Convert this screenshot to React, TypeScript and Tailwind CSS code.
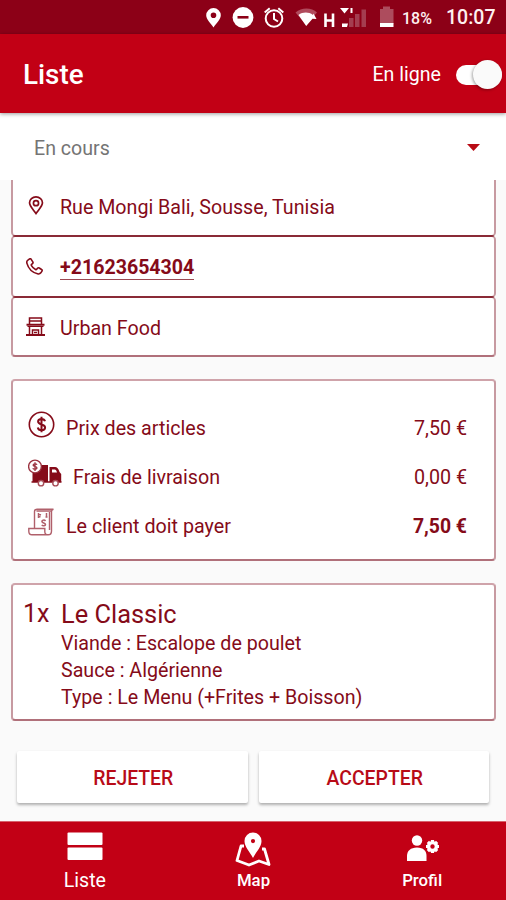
import React from "react";

const LocationIcon = () => (
  <svg className="mt-[-5px] h-[19px] w-[16px]" viewBox="0 0 16 20" fill="none" stroke="#850b19" strokeWidth="1.800">
    <path d="M8 18.400C5.400 14.600 1.200 10.800 1.200 7.200a6.800 6.200 0 0 1 13.600 0C14.800 10.800 10.600 14.600 8 18.400Z" />
    <circle cx="8" cy="7.500" r="2.700" />
  </svg>
);

const PhoneIcon = () => (
  <svg className="mt-[-2px] mr-[2px] h-[17px] w-[17px]" viewBox="0 0 18 18" fill="none" stroke="#850b19" strokeWidth="1.700" strokeLinejoin="round">
    <path d="M2 2.300 3.800 1C4.500.6 5.100.8 5.500 1.400l1.700 2.700c.4.700.3 1.300-.3 1.800l-1 .8c-.4.400-.4.800-.1 1.300 1.100 1.900 2.500 3.200 4.300 4.200.5.300.9.200 1.200-.2l.9-1.100c.5-.6 1.100-.7 1.800-.3l2.500 1.600c.7.400.8 1.100.4 1.700l-1.200 1.800c-.8 1.100-2 1.400-3.500 1C6.700 15.300 2.500 11 1 5.700.6 4.200.9 3 2 2.300Z" />
  </svg>
);

const ShopIcon = () => (
  <svg className="mt-[-5px] h-[19px] w-[19px] shrink-0" viewBox="0 0 19 19" fill="none" stroke="#850b19">
    <path strokeWidth="1.500" d="M3.500 7V1h12v6M3.500 4h12M3.500 9.500V18M15.500 9.500V18M6.500 18v-5h6v5M8 15.500h3" />
    <path strokeWidth="2" d="M.5 7.800h18M0 17.900h19" />
    <path d="M1.500 9.500h16" strokeWidth="1" />
  </svg>
);

const CoinIcon = () => (
  <svg className="mt-[-9px] h-[27px] w-[27px] shrink-0" viewBox="0 0 27 27" fill="none" stroke="#850b19">
    <circle cx="13.500" cy="13.500" r="12.200" strokeWidth="1.600" />
    <path d="M17 10.200c-.4-1.600-1.700-2.300-3.500-2.300-2 0-3.400 1-3.400 2.600 0 3.900 7 2 7 6 0 1.700-1.500 2.700-3.500 2.700s-3.500-1-3.800-2.700M13.500 5.700v15.600" strokeWidth="2" />
  </svg>
);

const TruckIcon = () => (
  <svg className="mt-[-9px] h-[28px] w-[34px] shrink-0" viewBox="0 0 34 28">
    <path fill="#850b19" d="M4.500 6H20v17H4.500zM21.500 8H27c2 0 3.500 1.700 4.500 5l1.700 2v8H21.500z" />
    <path fill="#fff" d="M24 10.500h2.700c1 0 1.800 1 2.300 3h-5z" />
    <path stroke="#850b19" strokeWidth="1.500" d="M3.500 23h30" />
    <g fill="#fff" stroke="#a84d58" strokeWidth="1.400">
      <circle cx="13" cy="24.200" r="2.700" />
      <circle cx="27.500" cy="24.200" r="2.700" />
      <circle cx="7" cy="7.500" r="6.400" stroke="#9b3340" />
    </g>
    <path fill="none" stroke="#9b3340" strokeWidth="1.300" d="M9 5.700c-.5-1-3.700-1.200-3.900.3-.2 1.700 3.900 1.200 3.900 3.100 0 1.500-3.600 1.500-4.200.1M7 3.300v8.600" />
  </svg>
);

const ReceiptIcon = () => (
  <svg className="mt-[-9px] h-[28px] w-[27px] shrink-0" viewBox="0 0 27 28" fill="none" stroke="#b0606b" strokeWidth="1.400">
    <path d="M6.500 20V3.500C6.500 2 7.400 1.200 9 1.200h16.500c-1.400.3-2 1-2 2.300V23c0 2.500-1 3.800-3.300 3.800H4c-2.200 0-3.200-1.200-3.200-3.500V20.500h16v3c0 2.200 1 3.300 3.200 3.300M8.500 3h15M21.500 4v18" />
    <path strokeWidth="1.500" d="M10.500 5v5M10 6l3 1M10 8.800h2.500M18.500 5v4M17.500 9h2M17.500 13c-1-1.500-4-1-3.500.8.4 1.500 3.500 1 3.500 2.700 0 1.600-2.800 1.700-3.700.3" />
  </svg>
);

function StatusBar() {
  return (
    <div className="flex h-[34px] shrink-0 items-center justify-end bg-[#8c0017] pr-[11px] text-[#fff0f0]">
      <svg className="h-[34px] w-[200px] shrink-0" viewBox="200 0 200 34">
        <path fill="#fff" fillRule="evenodd" d="M213.500 27.500c-3-4.300-7.300-8-7.300-12.200a7.300 7.300 0 0 1 14.600 0c0 4.200-4.300 7.900-7.300 12.200ZM213.500 12.500a2.800 2.800 0 1 0 0 5.600 2.800 2.800 0 0 0 0-5.600Z" />
        <circle cx="243" cy="17.500" r="10.400" fill="#fff" />
        <path stroke="#8c0017" strokeWidth="2.600" d="M237.500 17.300h11" />
        <g fill="none" stroke="#fff" strokeWidth="2">
          <circle cx="274" cy="18.500" r="8.300" />
          <path d="M274 13v6l4 2.500M264.700 12.500l5-4.300M283.300 12.500l-5-4.300" />
        </g>
        <path fill="#b04a5c" d="M295.500 12.500c6-5.500 16-5.500 21.500 0L306.200 25z" />
        <path fill="#fff" d="M298.500 15c4.500-3.200 10-3.200 14.500 0l.5-1.500 3 5.500-4-.3-6.300 7.300z" />
        <path fill="none" stroke="#fff" strokeWidth="2.600" d="M325.500 13.500V27M333 13.500V27M325.500 20.500h7.500" />
        <path fill="#a43d50" d="M349 18h4.500v9H349zM355 14h4.500v13H355zM361.500 9.500h4.500V27h-4.500z" />
        <path fill="#fff" d="M340 8h9l-4.500 5.500zM350.500 8h2v5h-2zM342 23.500h6l-1 3.500h-5z" />
        <path fill="#ad4c5d" d="M380 9h3V6.500h7V9h3.500v15H380z" />
        <path fill="#fff" d="M380 23h13.500v4H380z" />
      </svg>
      <span className="mt-[3px] ml-[2px] w-[32px] whitespace-nowrap text-[16px] font-medium">18%</span>
      <span className="mt-[2px] ml-[12px] w-[49px] whitespace-nowrap text-[19.500px] font-medium">10:07</span>
    </div>
  );
}

function InfoRow({ icon, children, className }: { icon: React.ReactNode; children: React.ReactNode; className: string }) {
  return (
    <div className={`flex items-center rounded-[4px] border-x-2 border-t border-x-[#c79aa1] border-y-[#8a2a36] bg-white ${className}`}>
      <div className="ml-[13px] flex w-[19px] justify-center">{icon}</div>
      <div className="ml-[15px] whitespace-nowrap text-[19.650px]">{children}</div>
    </div>
  );
}

function PriceRow({ icon, label, price, bold }: { icon: React.ReactNode; label: string; price: string; bold?: boolean }) {
  return (
    <div className="flex h-[49px] items-center text-[19.700px]">
      {icon}
      <span className="ml-[11px] whitespace-nowrap">{label}</span>
      <span className={`ml-auto whitespace-nowrap ${bold ? "text-[19.400px] font-bold" : ""}`}>{price}</span>
    </div>
  );
}

const cardClass = "mr-[10px] ml-[11px] rounded-[4px] border-2 border-x-[#c79aa1] border-t-[#cfa3aa] border-b-[#b0707a] bg-white";

export default function App() {
  return (
    <div className="flex h-[900px] w-[506px] flex-col overflow-hidden bg-[#fafafa] font-['Roboto',sans-serif] leading-none text-[#850b19]">
      <StatusBar />
      <header className="relative z-10 flex h-[79px] shrink-0 items-center bg-[#c20015] pt-[3px] pl-[23px] text-white shadow-[0_1px_4px_rgba(0,0,0,0.400)]">
        <h1 className="whitespace-nowrap text-[27.800px] font-medium">Liste</h1>
        <span className="ml-auto whitespace-nowrap text-[19.600px]">En ligne</span>
        <div className="mr-[4px] ml-[15px] flex h-[20px] w-[46px] items-center justify-end rounded-full bg-white">
          <div className="mt-[-2px] h-[29px] w-[29px] shrink-0 rounded-full bg-[#fafafa] shadow-[-1px_1px_3px_rgba(0,0,0,0.350)]" />
        </div>
      </header>
      <div className="flex h-[67px] shrink-0 items-center justify-between bg-white pt-[2px] pr-[26px] pl-[34px] text-[19.600px] text-[#747474]">
        <span className="pt-[2px]">En cours</span>
        <svg className="h-[7px] w-[13px]" viewBox="0 0 13 7"><path fill="#b80b15" d="M0 0h13L6.500 7z" /></svg>
      </div>

      <main className="flex min-h-0 flex-1 flex-col">
        <div className="mr-[10px] ml-[11px] flex flex-col">
          <InfoRow className="h-[56px] rounded-t-none border-t-0 border-b pt-[1px]" icon={<LocationIcon />}>Rue Mongi Bali, Sousse, Tunisia</InfoRow>
          <InfoRow className="h-[61px] border-b pt-[2px]" icon={<PhoneIcon />}>
            <span className="border-b border-[#9b4852] text-[19.600px] font-bold">+21623654304</span>
          </InfoRow>
          <InfoRow className="h-[60px] border-b-2 border-b-[#b0707a] pt-[4px]" icon={<ShopIcon />}>Urban Food</InfoRow>
        </div>

        <section className={`${cardClass} mt-[22px] h-[182px] pt-[23px] pr-[27px] pl-[15px]`}>
          <PriceRow icon={<CoinIcon />} label="Prix des articles" price="7,50 €" />
          <PriceRow icon={<TruckIcon />} label="Frais de livraison" price="0,00 €" />
          <PriceRow icon={<ReceiptIcon />} label="Le client doit payer" price="7,50 €" bold />
        </section>

        <section className={`${cardClass} mt-[22px] flex h-[138px] pl-[10px]`}>
          <div className="w-[38px] whitespace-nowrap pt-[14px] text-[25px] leading-[30px]">1x</div>
          <div className="whitespace-nowrap pt-[14px] text-[19.650px] leading-[27px]">
            <div className="text-[25.400px] leading-[30px]">Le Classic</div>
            <div className="mt-[1px]">Viande : Escalope de poulet</div>
            <div>Sauce : Algérienne</div>
            <div>Type : Le Menu (+Frites + Boisson)</div>
          </div>
        </section>

        <div className="mx-auto mt-[30px] grid w-[472px] grid-cols-2 gap-[11px] text-[19.400px] font-medium text-[#b80b17]">
          <button className="h-[52px] rounded-[2px] bg-white pt-[3px] pl-[2px] shadow-[0_2px_3px_rgba(0,0,0,0.300)]">REJETER</button>
          <button className="h-[52px] rounded-[2px] bg-white pt-[3px] pl-[2px] shadow-[0_2px_3px_rgba(0,0,0,0.300)]">ACCEPTER</button>
        </div>
      </main>

      <nav className="grid h-[79px] shrink-0 grid-cols-3 border-t border-[#d7626c] bg-[#c20015] text-white">
        <div className="flex flex-col items-center pl-px">
          <svg className="mt-[9px] h-[30px] w-[36px]" viewBox="0 0 36 30" fill="#fff"><rect x=".5" y="1.500" width="35" height="12.500" rx="1" /><rect x=".5" y="16.500" width="35" height="12.500" rx="1" /></svg>
          <span className="mt-[10px] text-[19.600px]">Liste</span>
        </div>
        <div className="flex flex-col items-center pl-px">
          <svg className="mt-[9px] h-[36px] w-[36px]" viewBox="0 0 36 36">
            <path fill="none" stroke="#fff" strokeWidth="2.800" strokeLinejoin="round" d="M9 15H6L2 29.500l12 4.500 10-4 10 3.500L29.500 18H27" />
            <path fill="#fff" fillRule="evenodd" d="M18 27c-3-6-8.500-11-8.500-17a8.500 8.500 0 0 1 17 0c0 6-5.500 11-8.500 17Zm0-19a2.100 2.100 0 1 0 0 4.200A2.100 2.100 0 0 0 18 8Z" />
          </svg>
          <span className="mt-[5px] text-[16.800px] font-medium">Map</span>
        </div>
        <div className="flex flex-col items-center pl-px">
          <svg className="mt-[12px] ml-[2px] h-[28px] w-[34px]" viewBox="0 0 34 28" fill="#fff">
            <circle cx="11" cy="6.500" r="5.200" />
            <path d="M1 27v-5c0-5 3.500-8.500 10-8.500s9.500 3.500 9.500 8.500v5z" />
            <circle cx="26.500" cy="12.500" r="3.900" fill="none" stroke="#fff" strokeWidth="3.400" />
            <path fill="none" stroke="#fff" strokeWidth="3.200" d="M26.500 6v2M26.500 17v2M20 12.500h2M31 12.500h2M21.900 7.900l1.400 1.400M29.700 15.700l1.400 1.400M31.100 7.900l-1.400 1.400M23.300 15.700l-1.400 1.400" />
          </svg>
          <span className="mt-[10px] text-[16.800px] font-medium">Profil</span>
        </div>
      </nav>
    </div>
  );
}
